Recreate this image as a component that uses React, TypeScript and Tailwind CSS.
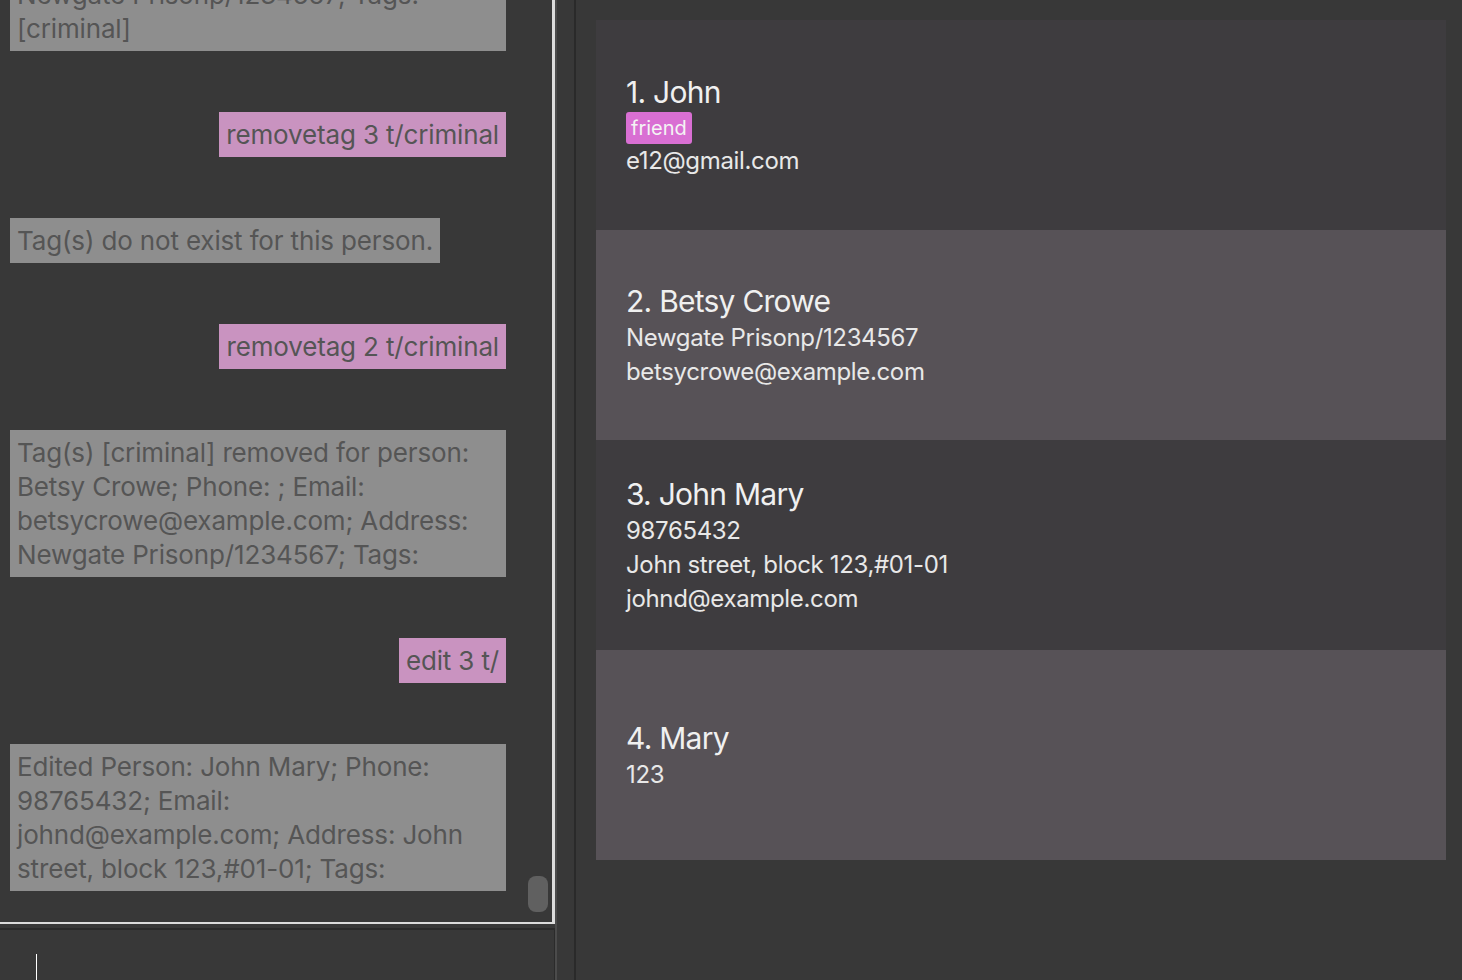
import React from "react";

const font = { fontFamily: "Inter, 'Noto Sans', sans-serif" };

function ResultBox({ lines, full }: { lines: string[]; full?: boolean }) {
  return (
    <div
      className={`${full ? "w-full" : "w-fit"} self-start bg-[#8e8e8e] text-[#555555] text-[26px] leading-[34px] pl-[7px] pr-[7px] pt-[6px] pb-[5px] tracking-[-0.15px]`}
    >
      {lines.map((l, i) => (
        <div key={i} className="whitespace-nowrap">
          {l}
        </div>
      ))}
    </div>
  );
}

function UserBox({ text }: { text: string }) {
  return (
    <div className="self-end bg-[#c993c0] text-[#555555] text-[26px] leading-[34px] px-[7px] pt-[6px] pb-[5px] tracking-[-0.15px] whitespace-nowrap">
      {text}
    </div>
  );
}

function Card({
  idx,
  name,
  tags,
  lines,
  alt,
}: {
  idx: number;
  name: string;
  tags?: string[];
  lines: string[];
  alt?: boolean;
}) {
  return (
    <div
      className={`h-[210px] flex flex-col justify-center pl-[30px] ${alt ? "bg-[#575257]" : "bg-[#3e3c3f]"}`}
    >
      <div className="text-[30px] leading-[40px] text-[#f0f0f0] tracking-[-0.75px]">
        {idx}. {name}
      </div>
      {tags && (
        <div className="flex gap-2">
          {tags.map((t) => (
            <span
              key={t}
              className="h-[32px] leading-[32px] px-[5px] rounded-[3px] bg-[#d96fd3] text-[#f4f4f4] text-[20px]"
            >
              {t}
            </span>
          ))}
        </div>
      )}
      {lines.map((l, i) => (
        <div key={i} className="text-[24px] leading-[34px] text-[#e8e8e8] tracking-[-0.35px]">
          {l}
        </div>
      ))}
    </div>
  );
}

export default function App() {
  return (
    <div
      className="w-[1462px] h-[980px] bg-[#383838] flex overflow-hidden"
      style={font}
    >
      {/* left column */}
      <div className="w-[557px] h-full flex flex-col border-r-2 border-[#4b4b4b] overflow-hidden">
        <div className="relative shrink-0 h-[924px] w-[555px] border-r-[3px] border-b-2 border-[#dcdcdc] overflow-hidden">
          <div className="flex flex-col gap-[61px] w-[496px] ml-[10px] mt-[-130px]">
            <ResultBox
              full
              lines={[
                "Tag(s) [criminal] added for person:",
                "Betsy Crowe; Phone: ; Email:",
                "betsycrowe@example.com; Address:",
                "Newgate Prisonp/1234567; Tags:",
                "[criminal]",
              ]}
            />
            <UserBox text="removetag 3 t/criminal" />
            <ResultBox lines={["Tag(s) do not exist for this person."]} />
            <UserBox text="removetag 2 t/criminal" />
            <ResultBox
              full
              lines={[
                "Tag(s) [criminal] removed for person:",
                "Betsy Crowe; Phone: ; Email:",
                "betsycrowe@example.com; Address:",
                "Newgate Prisonp/1234567; Tags:",
              ]}
            />
            <UserBox text="edit 3 t/" />
            <ResultBox
              full
              lines={[
                "Edited Person: John Mary; Phone:",
                "98765432; Email:",
                "johnd@example.com; Address: John",
                "street, block 123,#01-01; Tags:",
              ]}
            />
          </div>
          <div className="absolute left-[528px] top-[876px] w-[20px] h-[36px] rounded-[8px] bg-[#606060]" />
        </div>
        <div className="h-[4px] shrink-0" />
        <div className="flex-1 min-h-0 w-[556px] border-t-2 border-r-2 border-[#2b2b2b] pl-[36px] pt-[24px] overflow-hidden">
          <div className="w-[1px] h-[30px] bg-white" />
        </div>
      </div>
      {/* separator */}
      <div className="w-[19px] h-full border-r-2 border-[#2a2a2a]" />
      {/* right panel */}
      <div className="flex-1 pl-[20px] pr-[16px] pt-[20px]">
        <Card idx={1} name="John" tags={["friend"]} lines={["e12@gmail.com"]} />
        <Card
          idx={2}
          name="Betsy Crowe"
          alt
          lines={["Newgate Prisonp/1234567", "betsycrowe@example.com"]}
        />
        <Card
          idx={3}
          name="John Mary"
          lines={["98765432", "John street, block 123,#01-01", "johnd@example.com"]}
        />
        <Card idx={4} name="Mary" alt lines={["123"]} />
      </div>
    </div>
  );
}
